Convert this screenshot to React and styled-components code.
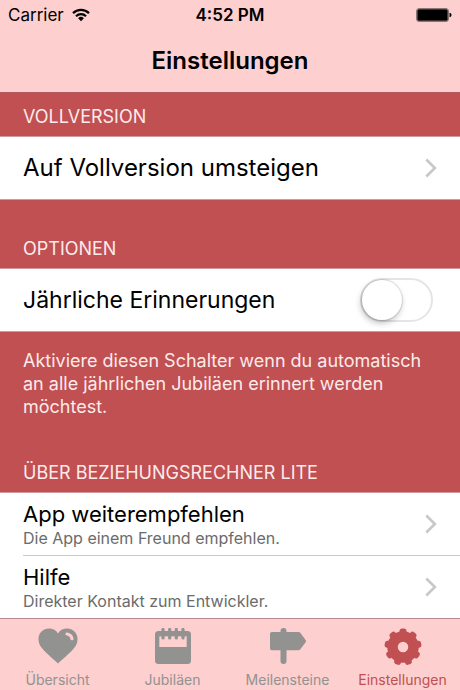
import React, {useState} from 'react';
import styled, {createGlobalStyle} from 'styled-components';

const red = '#c05052'
const pink = '#fdcfcf'
const grey = '#929290'

const tabs = [
  {id: 'overview', label: 'Übersicht', Icon: HeartIcon},
  {id: 'jubilees', label: 'Jubiläen', Icon: CalendarIcon},
  {id: 'milestones', label: 'Meilensteine', Icon: SignIcon},
  {id: 'settings', label: 'Einstellungen', Icon: GearIcon},
]

function App() {
  const [reminders, setReminders] = useState(false)
  const [tab, setTab] = useState('settings')

  return (
    <Wrap>
      <Header>
        <StatusBar>
          <Carrier>Carrier <WifiIcon /></Carrier>
          <Clock>4:52 PM</Clock>
          <Battery><BatteryIcon /></Battery>
        </StatusBar>
        <Title>Einstellungen</Title>
      </Header>
      <Body>
        <SectionTitle $first>VOLLVERSION</SectionTitle>
        <Group>
          <RowButton type="button">
            <RowTitle $size={24}>Auf Vollversion umsteigen</RowTitle>
            <Chevron />
          </RowButton>
        </Group>

        <SectionTitle>OPTIONEN</SectionTitle>
        <Group>
          <SwitchRow>
            <RowTitle as="label" htmlFor="reminders" $size={23}>Jährliche Erinnerungen</RowTitle>
            <Switch
              id="reminders"
              type="checkbox"
              role="switch"
              checked={reminders}
              onChange={e => setReminders(e.target.checked)}
            />
          </SwitchRow>
        </Group>
        <Note>
          Aktiviere diesen Schalter wenn du automatisch an alle jährlichen Jubiläen erinnert werden möchtest.
        </Note>

        <SectionTitle>ÜBER BEZIEHUNGSRECHNER LITE</SectionTitle>
        <Group $last>
          <RowButton type="button">
            <RowText>
              <RowTitle>App weiterempfehlen</RowTitle>
              <RowSub>Die App einem Freund empfehlen.</RowSub>
            </RowText>
            <Chevron />
          </RowButton>
          <Divider />
          <RowButton type="button">
            <RowText>
              <RowTitle>Hilfe</RowTitle>
              <RowSub>Direkter Kontakt zum Entwickler.</RowSub>
            </RowText>
            <Chevron />
          </RowButton>
        </Group>
      </Body>
      <TabBar>
        {tabs.map(({id, label, Icon}) => (
          <Tab
            key={id}
            type="button"
            $active={tab === id}
            aria-current={tab === id ? 'page' : undefined}
            onClick={() => setTab(id)}
          >
            <Icon />
            {label}
          </Tab>
        ))}
      </TabBar>
      <GlobalStyle />
    </Wrap>
  );
}

function WifiIcon() {
  return (
    <svg width="18" height="14" viewBox="0 0 18 14" aria-hidden="true">
      <g fill="none" stroke="#000" strokeWidth="2.2">
        <path d="M1 5.1a11.4 11.4 0 0 1 16 0" />
        <path d="M4 8.2a7.1 7.1 0 0 1 10 0" />
      </g>
      <path d="M9 13.2 6.1 10.2a4.1 4.1 0 0 1 5.8 0z" />
    </svg>
  )
}

function BatteryIcon() {
  return (
    <svg width="36" height="14" viewBox="0 0 36 14" aria-hidden="true">
      <rect x="0.5" y="0.5" width="32" height="13" rx="2.5" fill="none" stroke="#8a7474" />
      <rect x="1.3" y="1.3" width="30.4" height="11.4" rx="1.5" />
      <path d="M33.5 4.8c1.2.3 2 1.1 2 2.200s-.8 1.900-2 2.200z" />
    </svg>
  )
}

function Chevron() {
  return (
    <svg width="12" height="20" viewBox="0 0 12 20" aria-hidden="true">
      <path d="M1.300 1.500 9.900 10l-8.600 8.500" fill="none" stroke="#c7c7cc" strokeWidth="2.600" />
    </svg>
  )
}

function HeartIcon() {
  return (
    <svg width="40" height="36" viewBox="0 0 40 36" aria-hidden="true">
      <path
        d="M20 35.500C17.500 33 8.500 25.500 4.500 20.800 1.800 17.700.5 14.800.5 11.200.5 5 5.200.6 11 .6c3.900 0 7.200 1.700 9 4.900C21.800 2.300 25.100.6 29 .6c5.800 0 10.500 4.400 10.500 10.600 0 3.600-1.300 6.500-4 9.600C31.500 25.500 22.500 33 20 35.500z"
        fill="currentColor"
      />
      <path d="M29 6c2.800.4 4.500 2 5 4.700" fill="none" stroke={pink} strokeWidth="3.200" strokeLinecap="round" />
    </svg>
  )
}

function CalendarIcon() {
  return (
    <svg width="36" height="36" viewBox="0 0 36 36" aria-hidden="true">
      <rect y="3" width="36" height="33" rx="3.500" fill="currentColor" />
      <path d="M4.300 8.300h27.400V19H4.300z" fill={pink} />
      <path
        d="M8 1.500v8.500M14.700 1.500v8.500M21.300 1.500v8.500M28 1.500v8.500"
        stroke="currentColor"
        strokeWidth="3.200"
        strokeLinecap="round"
      />
    </svg>
  )
}

function SignIcon() {
  return (
    <svg width="36" height="36" viewBox="0 0 36 36" aria-hidden="true">
      <g fill="currentColor">
        <rect x="10.500" width="6" height="36" rx="3" />
        <path d="M2 4h26.500c.8 0 1.300.2 1.800.8l5.300 7.100c.6.800.6 1.500 0 2.300l-5.300 7.100c-.5.600-1 .9-1.800.9H2c-1.300 0-2-.7-2-2V6c0-1.300.7-2 2-2z" />
      </g>
    </svg>
  )
}

// ring with nine rounded teeth
function GearIcon() {
  const teeth = [0, 40, 80, 120, 160, 200, 240, 280, 320]
  return (
    <svg width="38" height="38" viewBox="0 0 38 38" aria-hidden="true">
      <circle cx="19" cy="19" r="10.500" fill="none" stroke="currentColor" strokeWidth="10.500" />
      {teeth.map(a => (
        <rect key={a} x="15.500" y="0.500" width="7" height="7" rx="2.800" fill="currentColor" transform={`rotate(${a} 19 19)`} />
      ))}
    </svg>
  )
}

const GlobalStyle = createGlobalStyle`
  body {
    margin: 0;
    background: ${red};
  }
  * {
    box-sizing: border-box;
  }
  button {
    font: inherit;
    border: 0;
    margin: 0;
    cursor: pointer;
  }
`

const Wrap = styled.div`
  display: flex;
  flex-direction: column;
  min-height: 100vh;
  background: ${red};
  color: #000;
  font-family: Inter, 'Liberation Sans', sans-serif;
`

const Header = styled.header`
  background: ${pink};
  border-bottom: 1px solid #b5585c;
`

const StatusBar = styled.div`
  display: grid;
  grid-template-columns: 1fr auto 1fr;
  align-items: center;
  height: 30px;
  padding: 0 8px;
  font-size: 17px;
`

const Carrier = styled.span`
  display: flex;
  align-items: center;
  gap: 8px;
`

const Clock = styled.time`
  font-weight: 600;
`

const Battery = styled.span`
  display: flex;
  justify-content: flex-end;
`

const Title = styled.h1`
  margin: 0;
  padding: 15px 0;
  font-size: 24px;
  line-height: 32px;
  font-weight: 600;
  text-align: center;
`

const Body = styled.main`
  flex: 1;
`

const SectionTitle = styled.h2`
  margin: 0;
  padding: ${p => p.$first ? 12 : 37}px 23px 7px;
  color: #fdeaea;
  font-size: 18px;
  line-height: 24px;
  font-weight: 400;
`

const Group = styled.section`
  background: #fff;
  border: 0 solid #cf9a9c;
  border-width: ${p => p.$last ? '1px 0 0' : '1px 0'};
`

const RowButton = styled.button`
  display: flex;
  align-items: center;
  justify-content: space-between;
  width: 100%;
  min-height: 62px;
  padding: 0 23px;
  background: none;
  color: inherit;
  text-align: left;
`

const SwitchRow = styled.div`
  display: flex;
  align-items: center;
  justify-content: space-between;
  min-height: 62px;
  padding: 0 27px 0 23px;
`

const RowText = styled.span`
  display: flex;
  flex-direction: column;
`

const RowTitle = styled.span`
  font-size: ${p => p.$size || 22}px;
  line-height: 28px;
`

const RowSub = styled.span`
  color: #6b6b6b;
  font-size: 16px;
  line-height: 20px;
`

const Divider = styled.hr`
  height: 1px;
  margin: 0 0 0 23px;
  border: 0;
  background: #c8c7cc;
`

const Switch = styled.input`
  appearance: none;
  flex: none;
  width: 73px;
  height: 44px;
  margin: 0;
  border: 2px solid #e5e5e5;
  border-radius: 22px;
  background: ${p => p.checked ? red : '#fff'};
  cursor: pointer;

  &::before {
    content: '';
    display: block;
    width: 40px;
    height: 40px;
    margin-left: ${p => p.checked ? 29 : 0}px;
    border-radius: 50%;
    background: #fff;
    box-shadow: 0 0 1px 1px rgba(0, 0, 0, 0.12), -1px 3px 6px rgba(0, 0, 0, 0.25);
  }
`

const Note = styled.p`
  margin: 0;
  padding: 17px 23px 6px;
  color: #fdeaea;
  font-size: 18px;
  line-height: 23px;
`

const TabBar = styled.nav`
  position: sticky;
  bottom: 0;
  display: grid;
  grid-template-columns: repeat(4, 1fr);
  background: ${pink};
  border-top: 1px solid #b58a90;
`

const Tab = styled.button`
  display: flex;
  flex-direction: column;
  align-items: center;
  justify-content: space-between;
  height: 71px;
  padding: 9px 0 1px;
  background: none;
  color: ${p => p.$active ? red : grey};

  && {
    font-size: 14px;
    line-height: 18px;
  }
`

export default App;
